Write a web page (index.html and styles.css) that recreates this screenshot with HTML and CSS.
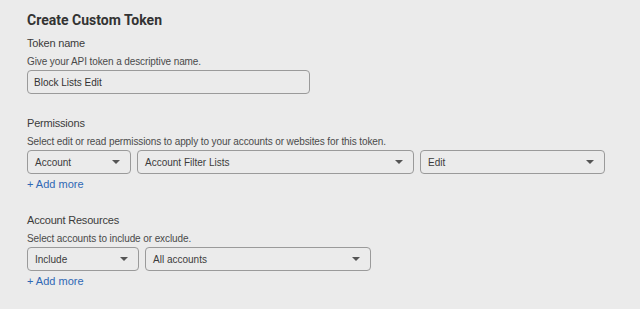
FILE: index.html
```html
<!DOCTYPE html>
<html lang="en-US">

<head>
    <meta charset="UTF-8">
    <meta name="viewport" content="width=device-width, initial-scale=1">
    <title>Create Custom Token</title>
    <link rel="stylesheet" href="styles.css">
</head>

<body>
    <main class="page">
        <h1 class="title">Create Custom Token</h1>

        <section class="field">
            <label class="label" for="token-name">Token name</label>
            <p class="hint">Give your API token a descriptive name.</p>
            <input id="token-name" class="text-input" type="text" value="Block Lists Edit">
        </section>

        <section class="field field-gap">
            <h2 class="label">Permissions</h2>
            <p class="hint">Select edit or read permissions to apply to your accounts or websites for this token.</p>
            <div class="row">
                <div class="select w-account">Account<span class="caret"></span></div>
                <div class="select w-filter">Account Filter Lists<span class="caret"></span></div>
                <div class="select w-edit">Edit<span class="caret"></span></div>
            </div>
            <a class="add-more" href="#">+ Add more</a>
        </section>

        <section class="field field-gap">
            <h2 class="label">Account Resources</h2>
            <p class="hint">Select accounts to include or exclude.</p>
            <div class="row">
                <div class="select w-include">Include<span class="caret"></span></div>
                <div class="select w-all">All accounts<span class="caret"></span></div>
            </div>
            <a class="add-more" href="#">+ Add more</a>
        </section>
    </main>
</body>

</html>
```

FILE: styles.css
```css
/* Page */
body {
    margin: 0;
    background-color: #ebebeb;
    font-family: "Liberation Sans", Arial, sans-serif;
    color: #3b3b3b;
}

.page {
    display: flex;
    flex-direction: column;
    padding: 11px 0 0 27px;
}

.title {
    margin: 0 0 7px;
    font-family: Roboto, "Liberation Sans", sans-serif;
    font-size: 14px;
    line-height: 18px;
    font-weight: bold;
    color: #333;
}

/* Fields */
.field {
    display: flex;
    flex-direction: column;
    align-items: flex-start;
}

.field-gap {
    margin-top: 22px;
}

.label {
    margin: 0 0 4px;
    font-size: 11px;
    line-height: 15px;
    letter-spacing: -0.2px;
    font-weight: normal;
    color: #3b3b3b;
}

.hint {
    margin: 0 0 2px;
    font-size: 10px;
    line-height: 13px;
    letter-spacing: -0.1px;
    color: #4a4a4a;
}

.text-input {
    box-sizing: border-box;
    width: 283px;
    height: 24px;
    margin: 0;
    padding: 0 6px;
    border: 1px solid #9a9a9a;
    border-radius: 4px;
    background: transparent;
    font-family: inherit;
    font-size: 10px;
    color: #333;
}

/* Selects */
.row {
    display: flex;
    gap: 6px;
}

.select {
    box-sizing: border-box;
    display: flex;
    align-items: center;
    justify-content: space-between;
    height: 24px;
    padding: 0 10px 0 7px;
    border: 1px solid #9a9a9a;
    border-radius: 4px;
    font-size: 10px;
    color: #3b3b3b;
}

.caret {
    width: 0;
    height: 0;
    border-left: 4px solid transparent;
    border-right: 4px solid transparent;
    border-top: 4px solid #555;
}

.w-account { width: 104px; }
.w-filter { width: 277px; }
.w-edit { width: 185px; }
.w-include { width: 112px; }
.w-all { width: 226px; }

.add-more {
    margin-top: 3px;
    font-size: 11px;
    line-height: 14px;
    color: #2f68b5;
    text-decoration: none;
}
```
